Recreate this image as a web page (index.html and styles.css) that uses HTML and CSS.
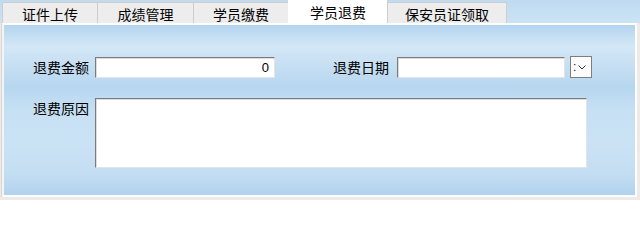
FILE: index.html
```html
<!DOCTYPE html>
<html lang="zh-CN">
<head>
<meta charset="utf-8">
<title>学员退费</title>
<link rel="stylesheet" href="styles.css">
</head>
<body>
<div class="window">
  <div class="tabs">
    <div class="tab t1">证件上传</div>
    <div class="tab t2">成绩管理</div>
    <div class="tab t3">学员缴费</div>
    <div class="tab t4 active">学员退费</div>
    <div class="tab t5">保安员证领取</div>
  </div>
  <div class="panel">
    <div class="row">
      <label class="label">退费金额</label>
      <div class="input amount">0</div>
      <label class="label label2">退费日期</label>
      <div class="input date"></div>
      <div class="dd">
        <span class="dots">:</span>
        <svg width="8" height="5" viewBox="0 0 8 5"><polyline points="0.5,0.5 4,4 7.5,0.5" fill="none" stroke="#333" stroke-width="1"/></svg>
      </div>
    </div>
    <div class="row row2">
      <label class="label">退费原因</label>
      <div class="input reason"></div>
    </div>
  </div>
</div>
</body>
</html>
```
FILE: styles.css
```css
html, body {
  margin: 0;
  padding: 0;
}
body {
  width: 640px;
  height: 200px;
  overflow: hidden;
  font-family: "Noto Sans CJK SC", "Noto Sans", sans-serif;
  font-size: 14px;
  color: #000;
}
.window {
  width: 640px;
  height: 200px;
  background: #efeaea;
  display: flex;
  flex-direction: column;
}
.tabs {
  height: 23px;
  flex: none;
  display: flex;
  align-items: flex-end;
  padding-left: 2px;
  background: linear-gradient(#bfdbf1, #cbe3f5);
}
.tab {
  box-sizing: border-box;
  height: 21px;
  background: #ededed;
  border: 1px solid #cdcdcd;
  border-bottom: none;
  border-right: none;
  display: flex;
  align-items: center;
  justify-content: center;
  line-height: 1;
  padding-top: 1px;
}
.t1 { width: 95px; }
.t2 { width: 96px; }
.t3 { width: 95px; }
.t4 { width: 99px; }
.t5 { width: 120px; border-right: 1px solid #cdcdcd; }
.tab.active {
  height: 23px;
  background: #fff;
  border-color: #fff;
  padding-top: 0;
}
.panel {
  flex: 1;
  margin: 0 3px 3px 2px;
  border: 2px solid #fff;
  border-left-color: #f4f4f4;
  box-shadow: -1px 0 0 #d6d6d6;
  background: linear-gradient(
    #b3d4ef 0px,
    #c9e1f3 14px,
    #d3e7f6 22px,
    #c3ddf2 45px,
    #b6d7f0 62px,
    #c6e0f3 85px,
    #cae2f4 120px,
    #c3ddf2 150px,
    #b0d2ee 170px
  );
  padding: 31px 0 0 29px;
  display: flex;
  flex-direction: column;
}
.row {
  display: flex;
  align-items: center;
  height: 22px;
}
.row2 {
  margin-top: 20px;
  align-items: flex-start;
  height: auto;
}
.label {
  width: 62px;
  flex: none;
  line-height: 22px;
}
.row2 .label {
  line-height: 1;
  padding-top: 3px;
}
.label2 {
  margin-left: 58px;
  width: 64px;
}
.input {
  box-sizing: border-box;
  background: #fff;
  border: 1px solid #e4e4e4;
  border-top-color: #7b7b7b;
  border-left-color: #7b7b7b;
  box-shadow: inset 1px 1px 0 #dcdcdc;
}
.amount {
  width: 180px;
  height: 21px;
  text-align: right;
  padding-right: 5px;
  font-family: "Liberation Sans", sans-serif;
  font-size: 13px;
  line-height: 19px;
}
.date {
  width: 168px;
  height: 21px;
}
.dd {
  box-sizing: border-box;
  margin-left: 5px;
  width: 22px;
  height: 22px;
  background: #fbfbfb;
  border: 1px solid #7d7d7d;
  display: flex;
  align-items: center;
  padding-left: 2px;
  gap: 2px;
}
.dots {
  font-family: "Liberation Sans", sans-serif;
  font-size: 12px;
  line-height: 1;
  color: #222;
}
.reason {
  width: 492px;
  height: 70px;
}
```
